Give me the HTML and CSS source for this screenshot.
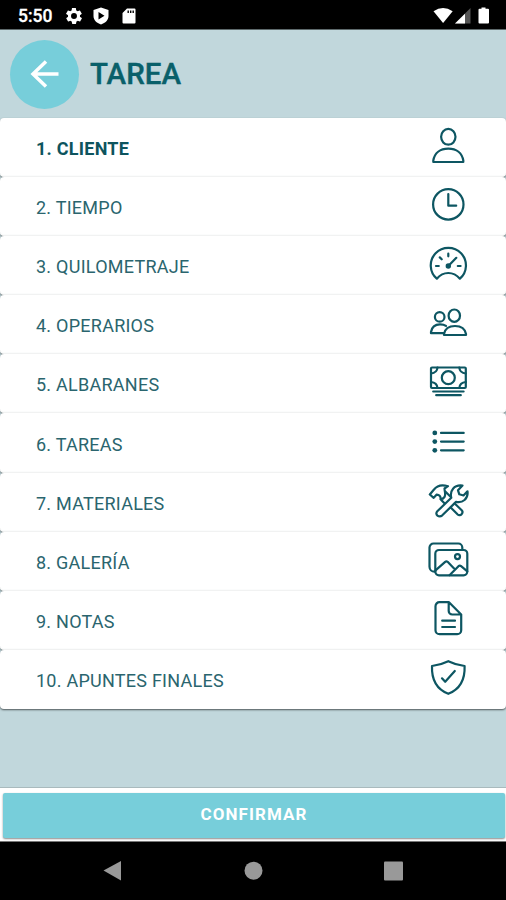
FILE: index.html
```html
<!DOCTYPE html>
<html lang="es">
<head>
<meta charset="utf-8">
<title>Tarea</title>
<link rel="stylesheet" href="styles.css">
</head>
<body>
<div class="status">
  <span class="time">5:50</span>
  <svg class="s-gear" width="16" height="16" viewBox="2 2 20 20"><path fill="#fff" fill-rule="evenodd" d="M19.4 13c0-.3.1-.6.1-1s0-.7-.1-1l2.1-1.600c.2-.2.200-.4.100-.6l-2-3.500c-.1-.2-.4-.3-.6-.2l-2.500 1c-.5-.4-1.100-.7-1.700-1l-.4-2.600c0-.3-.2-.5-.5-.5h-4c-.3 0-.5.2-.5.5l-.4 2.600c-.6.3-1.200.6-1.700 1l-2.500-1c-.2-.1-.5 0-.6.2l-2 3.500c-.1.200-.1.500.1.6L4.600 11c-.1.300-.1.700-.1 1s0 .7.100 1l-2.100 1.600c-.2.200-.2.400-.1.600l2 3.500c.1.200.4.300.6.2l2.500-1c.5.4 1.100.7 1.700 1l.4 2.600c0 .3.200.5.500.5h4c.3 0 .5-.2.500-.5l.4-2.600c.6-.3 1.200-.6 1.700-1l2.500 1c.2.1.5 0 .6-.2l2-3.500c.1-.2.100-.4-.1-.6zM12 15.700a3.700 3.700 0 1 1 0-7.400 3.700 3.700 0 0 1 0 7.400z"/></svg>
  <svg class="s-shield" width="16" height="18" viewBox="0 0 16 18"><path fill="#fff" fill-rule="evenodd" d="M8 .5 15.500 3v6c0 4-3 7-7.500 8.500C3.500 16 .5 13 .5 9V3zM5.500 5v7.500L11.500 8.700z"/></svg>
  <svg class="s-card" width="14" height="16" viewBox="0 0 14 16"><path fill="#fff" fill-rule="evenodd" d="M5 .5h7.500a1 1 0 0 1 1 1v13a1 1 0 0 1-1 1h-11a1 1 0 0 1-1-1V5zM5.500 2.500v2.500h1.400V2.500zM8 2.500v2.500h1.400V2.500zM10.500 2.500v2.500h1.400V2.500z"/></svg>
  <svg class="s-signal" width="58" height="18" viewBox="0 0 58 18"><path fill="#fff" d="M.5 4.300Q10 -2.500 19.700 4.300L10.100 16z"/><path fill="#555" d="M37.500 1v15.500H22z"/><path fill="#fff" d="M32 6.700v9.800H22z"/><path fill="#fff" d="M48.500 1.700V.500h4v1.200H55a1 1 0 0 1 1 1V15.500a1 1 0 0 1-1 1h-8.500a1 1 0 0 1-1-1V2.700a1 1 0 0 1 1-1z"/></svg>
</div>
<header class="header">
  <div class="back"><svg width="30" height="30" viewBox="0 0 30 30"><path d="M28.500 15H3M16 2.500 3 15l13 12.500"/></svg></div>
  <h1 class="title">TAREA</h1>
</header>
<main class="list">
  <div class="row current"><span>1. CLIENTE</span><svg class="icon" viewBox="0 0 44 44"><ellipse cx="22.300" cy="12.800" rx="7.200" ry="7.900"/><path d="M7.300 38v-1.500C8.500 29 14 24.600 22.300 24.600S36.100 29 37.300 36.500V38z"/></svg></div>
  <div class="row"><span>2. TIEMPO</span><svg class="icon" viewBox="0 0 44 44"><circle cx="22.300" cy="21.400" r="15.200"/><path d="M22.300 11v11.700h7.900"/></svg></div>
  <div class="row"><span>3. QUILOMETRAJE</span><svg class="icon" viewBox="0 0 44 44"><path d="M10.800 36.700A17.600 17.600 0 1 1 33.900 36.700Q29 31 22.300 31T10.800 36.700z"/><path d="M10 24h2.800M31.800 24h2.800M22.300 11.700v2.600M13.800 15.400l1.900 1.900M22.300 24l8-8.200"/><circle class="dot" cx="22.300" cy="24" r="2.700"/></svg></div>
  <div class="row"><span>4. OPERARIOS</span><svg class="icon" viewBox="0 0 44 44"><circle cx="13.700" cy="15.900" r="4.800"/><ellipse cx="28.300" cy="14.700" rx="5.700" ry="6.200"/><path d="M18 34v-1C19 27.500 22.500 25 29 25s10 2.500 11 8v1z"/><path d="M20 24.900C18.500 23.800 16.500 23.300 14 23.300 8.500 23.300 5.800 26 5 31v1.200h12.500"/></svg></div>
  <div class="row"><span>5. ALBARANES</span><svg class="icon" viewBox="0 0 44 44"><rect x="5" y="7.500" width="34.800" height="20.500" rx="1"/><circle cx="22.300" cy="17.700" r="6.500"/><path d="M5 13.500q6-.5 6.500-6M39.800 13.500q-6-.5-6.500-6M5 22q6 .5 6.500 6M39.800 22q-6 .5-6.500 6M7.200 31.500h30.400M10.200 35.200h24.600"/></svg></div>
  <div class="row"><span>6. TAREAS</span><svg class="icon" viewBox="0 0 44 44"><path d="M15 12.900h22.700M15 21.600h22.700M15 30.300h22.700"/><circle class="dot" cx="8.800" cy="12.900" r="2.400"/><circle class="dot" cx="8.800" cy="21.600" r="2.400"/><circle class="dot" cx="8.800" cy="30.300" r="2.400"/></svg></div>
  <div class="row"><span>7. MATERIALES</span><svg class="icon" viewBox="0 0 44 44"><path d="M11.300 32.300 25.300 18.800C23.500 12 28 5.500 36.500 6.600L32 11.300l1.300 4 4.200 1.200L41.500 12.300C42.500 20 36.500 24.300 30 22.900L16.300 36.300C13 39 8.300 35.500 11.300 32.300z"/><path d="M18.200 24 14.500 20.200C15 17.500 13 15.500 10.500 15.700L7.700 18.800 3.800 15.500 8 10.500C11 6.500 15.500 5.200 22 7.200L18.500 9.500 18.800 12 24.300 17.500M14.500 20.200C18 20.200 20 17.500 18.800 12M28.700 24.500l7 6.700c2.300 2.500-1.400 6.700-4 4.300L24.700 28.500"/></svg></div>
  <div class="row"><span>8. GALERÍA</span><svg class="icon" viewBox="0 0 44 44"><path d="M9.300 33.700h-.8a5 5 0 0 1-5-5V9.500a4 4 0 0 1 4-4h24.800a4 4 0 0 1 4 4v2"/><rect x="9.300" y="12" width="32" height="25.300" rx="3.700"/><circle cx="31.500" cy="18.600" r="2.500"/><path d="m9.500 32.300 9.700-8.500q1.200-1 2.400 0l7.200 7.500M23.500 37.200l9-9q1.300-1.100 2.600 0l6.200 5.200"/></svg></div>
  <div class="row"><span>9. NOTAS</span><svg class="icon" viewBox="0 0 44 44"><path d="M23 5.200H13.500a4 4 0 0 0-4 4v24a4 4 0 0 0 4 4h17.700a4 4 0 0 0 4-4V17.500zM22.700 5.200v8.800a3.500 3.500 0 0 0 3.500 3.500h9M16.200 23.700h12.800M16.200 30h12.800"/></svg></div>
  <div class="row"><span>10. APUNTES FINALES</span><svg class="icon" viewBox="0 0 44 44"><path d="M22.300 5.200Q14.500 9 6 10C5.500 23 10 33 22.300 37.800 34.600 33 39.100 23 38.600 10Q30 9 22.300 5.200z"/><path d="m16 22.300 3.200 3.500L28.800 15"/></svg></div>
</main>
<footer class="footer"><button class="confirm">CONFIRMAR</button></footer>
<nav class="nav">
  <svg width="506" height="58" viewBox="0 0 506 58"><path fill="#999" d="M103.500 28.500 121 19v19.500z"/><circle cx="253.500" cy="28.700" r="9" fill="#999"/><rect x="384" y="19.500" width="19" height="19" rx="1" fill="#999"/></svg>
</nav>
</body>
</html>
```
FILE: styles.css
```css
* { box-sizing: border-box; }
body {
  margin: 0;
  width: 506px;
  height: 900px;
  display: flex;
  flex-direction: column;
  overflow: hidden;
  background: #c1d7dc;
  font-family: Roboto, "Liberation Sans", sans-serif;
  color: #0d545e;
}
.status {
  height: 30px;
  flex: none;
  display: flex;
  align-items: center;
  padding: 2px 15px 0 18px;
  background: #000;
  color: #fff;
  border-bottom: 1px solid #5e6a6c;
}
.time { width: 48px; font-size: 17.500px; font-weight: 500; line-height: 28px; -webkit-text-stroke: .3px #fff; }
.s-shield { margin-left: 11px; }
.s-card { margin-left: 13px; }
.s-signal { margin-left: auto; }
.header {
  height: 88px;
  flex: none;
  display: flex;
  align-items: center;
  gap: 11px;
  padding-left: 10px;
}
.back {
  width: 69px;
  height: 69px;
  border-radius: 50%;
  background: #77ceda;
  display: grid;
  place-items: center;
}
.back svg { fill: none; stroke: #fff; stroke-width: 3.500; }
.title { margin: 0; font-size: 29.500px; font-weight: 500; line-height: 36px; color: #09606a; -webkit-text-stroke: .4px #09606a; }
.list { flex: none; height: 591px; display: grid; grid-template-rows: repeat(10, 1fr); }
.row {
  display: flex;
  align-items: center;
  justify-content: space-between;
  padding: 4px 36px 0 36px;
  background: #fff;
  border-radius: 4px;
  box-shadow: 0 1px 2px #0008, inset 0 -1px #fbfcfc;
  color: #2a656e;
  font-size: 18px;
  line-height: 24px;
  letter-spacing: .25px;
}
.row:not(:last-child) { border-bottom: 1px solid #f8f9f9; }
.row:last-child { box-shadow: 0 1px 2px #0009; }
.current { font-weight: 700; color: #0d545e; }
.icon {
  width: 44px;
  height: 44px;
  margin-top: -6px;
  fill: none;
  stroke: #0d5662;
  stroke-width: 2.200;
  stroke-linecap: round;
  stroke-linejoin: round;
}
.icon .dot { fill: #0d5662; stroke: none; }
.footer {
  height: 55px;
  flex: none;
  margin-top: auto;
  padding: 5px 1px 4px 3px;
  background: #fff;
  border-top: 1px solid #a9babd;
  border-bottom: 1px solid #777;
}
.confirm {
  display: block;
  width: 100%;
  height: 45px;
  padding: 0 0 4px;
  border: 0;
  border-radius: 2px;
  background: #77ceda;
  box-shadow: 0 1px 2px #0007;
  color: #fff;
  font: 700 17px/24px Roboto, "Liberation Sans", sans-serif;
  letter-spacing: 1.050px;
}
.nav { height: 58px; flex: none; background: #000; }
.nav svg { display: block; }
```
